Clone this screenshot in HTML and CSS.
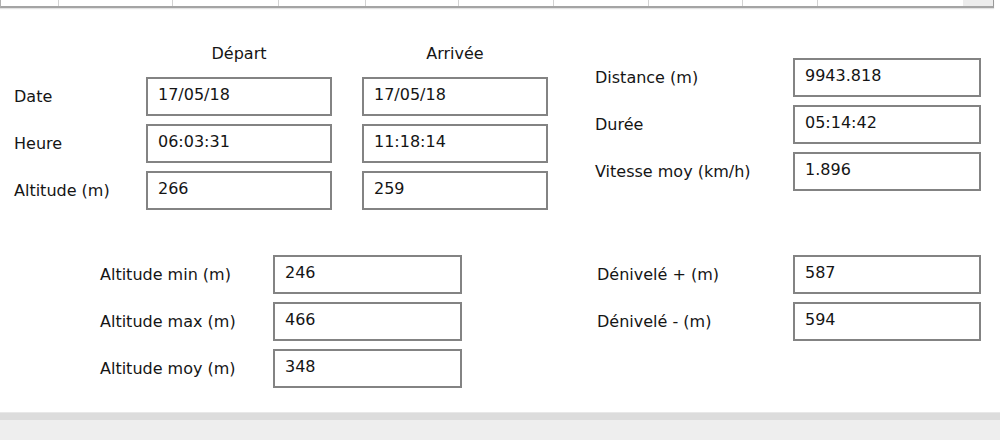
FILE: index.html
```html
<!DOCTYPE html>
<html lang="fr">
<head>
    <meta charset="UTF-8">
    <meta name="viewport" content="width=device-width, initial-scale=1.0">
    <title>Résumé de la trace</title>
    <link rel="stylesheet" href="styles.css">
</head>
<body>
    <!-- bottom edge of the track list above -->
    <div class="strip">
        <span class="cell w58"></span>
        <span class="cell w114"></span>
        <span class="cell w106"></span>
        <span class="cell w87"></span>
        <span class="cell w93"></span>
        <span class="cell w95"></span>
        <span class="cell w95"></span>
        <span class="cell w94"></span>
        <span class="cell w75"></span>
        <span class="cell last"></span>
        <span class="scroll"></span>
    </div>

    <div class="top">
        <!-- Départ / Arrivée -->
        <div class="trip">
            <span></span>
            <span class="head">Départ</span>
            <span class="head">Arrivée</span>

            <span class="label">Date</span>
            <div class="field">17/05/18</div>
            <div class="field">17/05/18</div>

            <span class="label">Heure</span>
            <div class="field">06:03:31</div>
            <div class="field">11:18:14</div>

            <span class="label">Altitude (m)</span>
            <div class="field">266</div>
            <div class="field">259</div>
        </div>

        <div class="stats">
            <span class="label">Distance (m)</span>
            <div class="field">9943.818</div>
            <span class="label">Durée</span>
            <div class="field">05:14:42</div>
            <span class="label">Vitesse moy (km/h)</span>
            <div class="field">1.896</div>
        </div>
    </div>

    <div class="bottom">
        <div class="alt">
            <span class="label">Altitude min (m)</span>
            <div class="field">246</div>
            <span class="label">Altitude max (m)</span>
            <div class="field">466</div>
            <span class="label">Altitude moy (m)</span>
            <div class="field">348</div>
        </div>

        <div class="deniv">
            <span class="label">Dénivelé + (m)</span>
            <div class="field">587</div>
            <span class="label">Dénivelé - (m)</span>
            <div class="field">594</div>
        </div>
    </div>

    <div class="footer"></div>
</body>
</html>
```

FILE: styles.css
```css
/* Basic Styles */
body {
    margin: 0;
    width: 1000px;
    height: 440px;
    display: flex;
    flex-direction: column;
    background: #fff;
    color: #151515;
    font-family: "DejaVu Sans", Verdana, sans-serif;
    font-size: 16px;
    overflow: hidden;
}

/* track list edge */
.strip {
    display: flex;
    width: 992px;
    height: 6px;
    border-left: 1px solid #b0b0b0;
    border-right: 1px solid #9a9a9a;
    border-bottom: 2px solid #a4a4a4;
    box-shadow: 0 1px 1px #e2e2e2;
}
.cell {
    border-right: 1px solid #d2d2d2;
}
.w58 { width: 57px; }
.w114 { width: 113px; }
.w106 { width: 105px; }
.w87 { width: 86px; }
.w93 { width: 92px; }
.w95 { width: 94px; }
.w94 { width: 93px; }
.w75 { width: 74px; }
.last {
    flex: 1;
    border-right: none;
}
.scroll {
    width: 30px;
    background: #ececec;
}

/* form blocks */
.top {
    display: flex;
    align-items: flex-start;
    padding: 35px 0 0 14px;
}
.bottom {
    display: flex;
    align-items: flex-start;
    margin-top: 45px;
    padding-left: 100px;
}
.trip,
.stats,
.alt,
.deniv {
    display: grid;
    row-gap: 8px;
    align-items: center;
    grid-auto-rows: 39px;
}
.trip {
    grid-template-columns: 102px 186px 186px;
    grid-template-rows: 26px;
    column-gap: 30px;
}
.stats {
    grid-template-columns: 198px 188px;
    margin: 15px 0 0 47px;
}
.alt {
    grid-template-columns: 173px 189px;
}
.deniv {
    grid-template-columns: 196px 188px;
    margin-left: 135px;
}

.head {
    align-self: start;
    line-height: 22px;
    text-align: center;
}
.label {
    line-height: 20px;
}
.field {
    box-sizing: border-box;
    height: 39px;
    padding: 6px 0 0 10px;
    border: 2px solid #838383;
    line-height: 20px;
}

.footer {
    margin-top: auto;
    height: 27px;
    border-top: 1px solid #e8e8e8;
    background: linear-gradient(#dcdcdc 0 7px, #eeeeee 7px);
}
```
